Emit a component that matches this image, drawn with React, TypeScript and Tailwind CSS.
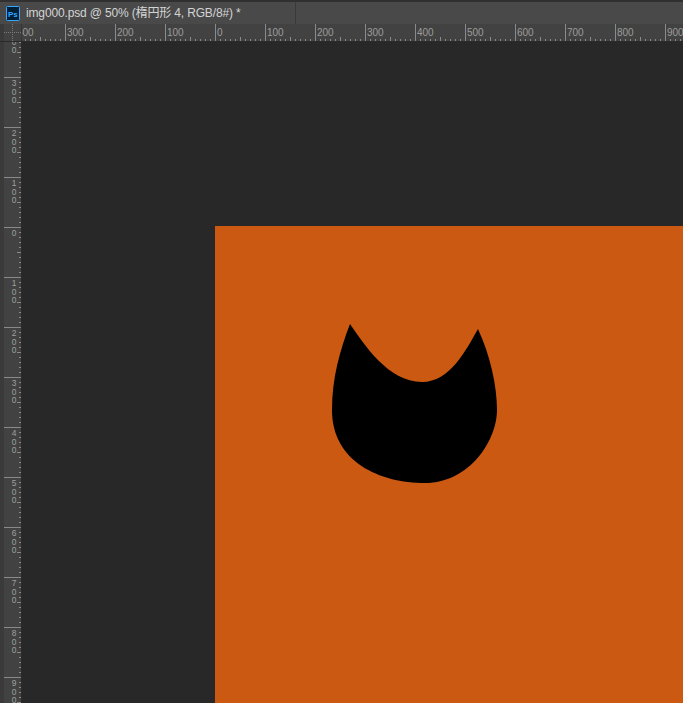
import React from "react";

const H_MAJORS = [-400, -300, -200, -100, 0, 100, 200, 300, 400, 500, 600, 700, 800, 900];

function HRuler() {
  const zero = 193;
  const ticks: React.ReactNode[] = [];
  for (let v = -450; v <= 1000; v += 10) {
    const x = zero + v / 2 + 0.5;
    if (v % 100 === 0) {
      ticks.push(<line key={"t" + v} x1={x} y1={0} x2={x} y2={17} stroke="#8a8a8a" strokeWidth={1} />);
    } else if (v % 50 === 0) {
      ticks.push(<line key={"t" + v} x1={x} y1={13} x2={x} y2={17} stroke="#8a8a8a" strokeWidth={1} />);
    } else {
      ticks.push(<line key={"t" + v} x1={x} y1={15} x2={x} y2={17} stroke="#8a8a8a" strokeWidth={1} />);
    }
  }
  return (
    <svg width={661} height={17} className="block">
      {ticks}
      {H_MAJORS.map((v) => (
        <text
          key={v}
          x={zero + v / 2 + 2}
          y={12}
          fill="#9c9c9c"
          fontSize={10}
          fontFamily="'Liberation Sans', Arial, sans-serif"
        >
          {Math.abs(v)}
        </text>
      ))}
    </svg>
  );
}

function VRuler() {
  const zero = 185;
  const ticks: React.ReactNode[] = [];
  for (let v = -450; v <= 1000; v += 10) {
    const y = zero + v / 2 + 0.5;
    if (v % 100 === 0) {
      ticks.push(<line key={"t" + v} x1={0} y1={y} x2={17} y2={y} stroke="#8a8a8a" strokeWidth={1} />);
    } else if (v % 50 === 0) {
      ticks.push(<line key={"t" + v} x1={13} y1={y} x2={17} y2={y} stroke="#8a8a8a" strokeWidth={1} />);
    } else {
      ticks.push(<line key={"t" + v} x1={15} y1={y} x2={17} y2={y} stroke="#8a8a8a" strokeWidth={1} />);
    }
  }
  const labels: React.ReactNode[] = [];
  for (let v = -400; v <= 900; v += 100) {
    const digits = String(Math.abs(v)).split("");
    digits.forEach((d, i) => {
      labels.push(
        <text
          key={v + "_" + i}
          x={10}
          y={zero + v / 2 + 9 + i * 8.5}
          fill="#a0a0a0"
          fontSize={8.4}
          textAnchor="middle"
          fontFamily="'Liberation Sans', Arial, sans-serif"
        >
          {d}
        </text>
      );
    });
  }
  return (
    <svg width={17} height={662} className="block">
      {ticks}
      {labels}
    </svg>
  );
}

function PsIcon() {
  return (
    <svg width={14} height={15} viewBox="0 0 14 15" className="block">
      <rect x={0.5} y={0.5} width={13} height={14} rx={1} fill="#001e36" stroke="#31a8ff" strokeWidth={1} />
      <text x={2} y={11} fill="#31a8ff" fontSize={8} fontWeight={700} fontFamily="'Liberation Sans', Arial, sans-serif">
        Ps
      </text>
    </svg>
  );
}

export default function App() {
  return (
    <div className="w-[683px] h-[703px] overflow-hidden bg-[#282828] flex flex-col">
      <div className="h-[24px] shrink-0 bg-[#494949] border-t-2 border-[#303030] flex">
        <div className="flex items-center gap-[6px] pl-[6px] pr-[10px] w-[296px] border-r border-[#3a3a3a]">
          <PsIcon />
          <span
            className="text-[12px] tracking-[-0.15px] text-[#d4d4d4] whitespace-nowrap leading-none"
            style={{ fontFamily: "'Liberation Sans', 'Noto Sans CJK JP', sans-serif" }}
          >
            img000.psd @ 50% (楕円形 4, RGB/8#) *
          </span>
        </div>
        <div className="flex-1" />
      </div>
      <div className="h-[17px] shrink-0 flex bg-[#424242]">
        <div className="w-[4px] bg-[#3a3a3a]" />
        <div className="w-[18px] relative border-r border-[#353535]">
          <div className="absolute left-[8px] top-0 bottom-0 border-l border-dotted border-[#7a7a7a]" />
          <div className="absolute top-[8px] left-0 right-0 border-t border-dotted border-[#7a7a7a]" />
        </div>
        <div className="flex-1 overflow-hidden">
          <HRuler />
        </div>
      </div>
      <div className="h-px shrink-0 bg-[#2a2a2a]" />
      <div className="flex-1 flex min-h-0">
        <div className="w-[4px] shrink-0 bg-[#3a3a3a]" />
        <div className="w-[17px] shrink-0 bg-[#424242] overflow-hidden">
          <VRuler />
        </div>
        <div className="w-px shrink-0 bg-[#2a2a2a]" />
        <div className="flex-1 min-w-0 pl-[193px] pt-[184px] overflow-hidden">
          <div className="w-[520px] h-[520px] bg-[#cb5912] relative">
            <svg
              className="absolute left-0 top-0"
              width={468}
              height={477}
              viewBox="215 226 468 477"
            >
              <path
                d="M350,324 C364,344 388,382 422,382 C450,382 466,350 478,329 C490,355 497,385 497,410 C497,440 470,483 425,483 C380,483 332,462 332,410 C332,378 340,350 350,324 Z"
                fill="#000"
              />
            </svg>
          </div>
        </div>
      </div>
    </div>
  );
}
